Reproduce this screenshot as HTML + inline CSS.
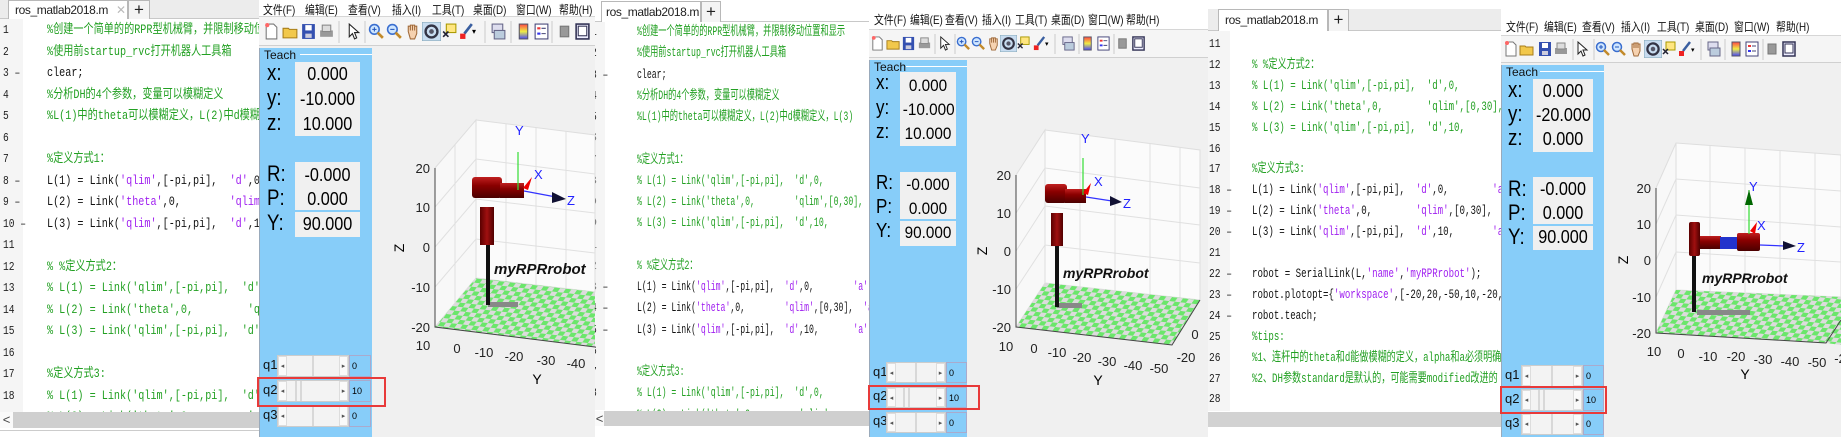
<!DOCTYPE html>
<html><head><meta charset="utf-8">
<style>
*{margin:0;padding:0;box-sizing:border-box}
body{width:1841px;height:437px;overflow:hidden;background:#fff;position:relative;font-family:"Liberation Sans","Noto Sans CJK SC",sans-serif}
.ed{position:absolute;top:0;height:437px;background:#fff;overflow:hidden}
.tabbar{position:absolute;left:0;right:0;background:#ececec;border-bottom:1px solid #c8c8c8}
.tab{position:absolute;background:#fff;border:1px solid #b8b8b8;border-bottom:none;font-size:12px;letter-spacing:-0.4px;color:#222;white-space:nowrap;padding-left:6px;overflow:hidden}
.tab i{font-style:normal;color:#bbb;margin-left:8px}
.plus{position:absolute;background:#f4f4f4;border:1px solid #b8b8b8;border-bottom:none;font-size:17px;text-align:center;color:#222}
.gut{position:absolute;left:0;width:23px;background:#f5f5f5}
.ln{position:absolute;font-family:"Liberation Mono",monospace;font-size:12px;color:#222;white-space:pre;transform:scaleX(.8);transform-origin:left top}
.code{position:absolute;font-family:"Liberation Mono","Noto Sans CJK SC",monospace;font-size:13px;color:#111;white-space:pre;transform-origin:left top}
.c{color:#22a022}.s{color:#a020f0}
.sb{position:absolute;background:#cfcfcf}
.sb b{position:absolute;left:0;top:0;bottom:0;width:13px;background:#fafafa;font-weight:normal;font-size:13px;text-align:center;color:#444}
.fig{position:absolute;top:0;height:437px;background:#f0f0f0;overflow:hidden}
.menu{position:absolute;left:0;right:0;background:#fff;border-bottom:1px solid #d6d6d6}
.menu span{position:absolute;font-size:12px;color:#111;white-space:nowrap;transform:scaleX(.82);transform-origin:left top}
.tb{position:absolute;left:0;right:0;background:#f5f5f5;border-bottom:1px solid #d0d0d0}
.teach{position:absolute;background:#87cdf9;border-left:1px solid #9ab}
.teach .tt{position:absolute;left:4px;top:0;font-size:12px;color:#111}
.teach .gl{position:absolute;top:6px;height:1px;background:#fff;right:0}
.box{position:absolute;background:#f0f0f0}
.lab{position:absolute;font-size:22px;color:#000;transform:scaleX(.85);transform-origin:left}
.val{position:absolute;font-size:18px;color:#000;text-align:center;transform:scaleX(.9)}
.q{position:absolute;font-size:13px;color:#111}
.sl{position:absolute;height:22px;background:#f3f3f3;border:1px solid #ccc}
.sl .a{position:absolute;top:0;bottom:0;width:9px;background:#fafafa;border:1px solid #ddd;font-size:7px;line-height:20px;text-align:center;color:#555}
.sl .d{position:absolute;top:0;bottom:0;width:2px;background:#d8d8d8}
.vb{position:absolute;height:22px;border:1px solid #aac;font-size:9px;padding-left:2px;line-height:20px;color:#000}
.red{position:absolute;border:2px solid #e83a3a}
</style></head><body>

<svg width="0" height="0" style="position:absolute">
<defs>
<symbol id="i-new" viewBox="0 0 16 16"><path d="M3 1h7l3 3v11H3z" fill="#fff" stroke="#777"/><circle cx="4" cy="2" r="2" fill="#f66"/></symbol>
<symbol id="i-open" viewBox="0 0 16 16"><path d="M1 5h5l1 1h7v8H1z" fill="#f2c84b" stroke="#a77d1a"/></symbol>
<symbol id="i-save" viewBox="0 0 16 16"><rect x="2" y="1" width="12" height="14" fill="#3450b0"/><rect x="5" y="2" width="6" height="5" fill="#fff"/><rect x="5" y="10" width="6" height="4" fill="#ccd"/></symbol>
<symbol id="i-print" viewBox="0 0 16 16"><rect x="2" y="7" width="12" height="6" fill="#999"/><rect x="4" y="2" width="8" height="6" fill="#ddd" stroke="#888"/></symbol>
<symbol id="i-ptr" viewBox="0 0 16 16"><path d="M4 1v12l3-3 2 5 2-1-2-5h4z" fill="#fff" stroke="#222"/></symbol>
<symbol id="i-zi" viewBox="0 0 16 16"><circle cx="6" cy="6" r="4.5" fill="#cfe6ff" stroke="#3a6ecf" stroke-width="1.5"/><path d="M9 9l5 5" stroke="#c28a2a" stroke-width="2.5"/><path d="M4 6h4M6 4v4" stroke="#2255bb"/></symbol>
<symbol id="i-zo" viewBox="0 0 16 16"><circle cx="6" cy="6" r="4.5" fill="#cfe6ff" stroke="#3a6ecf" stroke-width="1.5"/><path d="M9 9l5 5" stroke="#c28a2a" stroke-width="2.5"/><path d="M4 6h4" stroke="#2255bb"/></symbol>
<symbol id="i-pan" viewBox="0 0 16 16"><path d="M4 8V3h2v4V2h2v5V2h2v5V3h2v7l-2 5H6z" fill="#f6d2b0" stroke="#a06a3a"/></symbol>
<symbol id="i-rot" viewBox="0 0 16 16"><rect x="0" y="0" width="16" height="16" fill="#c8dcf0" stroke="#8ab"/><circle cx="8" cy="8" r="5" fill="none" stroke="#334" stroke-width="2"/><circle cx="8" cy="8" r="2" fill="#556"/></symbol>
<symbol id="i-dc" viewBox="0 0 16 16"><rect x="5" y="1" width="9" height="8" fill="#ffe680" stroke="#a90"/><path d="M2 8l5 5M2 13l5-5" stroke="#223" stroke-width="1.5"/></symbol>
<symbol id="i-br" viewBox="0 0 16 16"><path d="M13 1L6 10" stroke="#3a5fa0" stroke-width="2.5"/><rect x="2" y="10" width="5" height="5" fill="#e22"/></symbol>
<symbol id="i-link" viewBox="0 0 16 16"><rect x="2" y="1" width="10" height="8" fill="#dde" stroke="#668"/><rect x="4" y="7" width="10" height="8" fill="#bcd" stroke="#668"/></symbol>
<symbol id="i-cb" viewBox="0 0 16 16"><defs><linearGradient id="gcb" x1="0" y1="0" x2="0" y2="1"><stop offset="0" stop-color="#f44"/><stop offset=".5" stop-color="#ee4"/><stop offset="1" stop-color="#44f"/></linearGradient></defs><rect x="4" y="1" width="8" height="14" fill="url(#gcb)" stroke="#556"/></symbol>
<symbol id="i-lg" viewBox="0 0 16 16"><rect x="2" y="1" width="12" height="14" fill="#fff" stroke="#447"/><rect x="4" y="4" width="3" height="2" fill="#e33"/><rect x="4" y="9" width="3" height="2" fill="#33e"/><path d="M8 5h4M8 10h4" stroke="#447"/></symbol>
<symbol id="i-gr" viewBox="0 0 16 16"><rect x="4" y="3" width="8" height="10" fill="#999" stroke="#777"/></symbol>
<symbol id="i-bx" viewBox="0 0 16 16"><rect x="2" y="1" width="12" height="14" fill="#eef" stroke="#335" stroke-width="1.5"/><rect x="4" y="3" width="8" height="9" fill="#fff" stroke="#335"/></symbol>
<pattern id="chk" width="12" height="8" patternUnits="userSpaceOnUse" patternTransform="skewX(-35) skewY(6)"><rect width="12" height="8" fill="#dcdcdc"/><rect width="6" height="4" fill="#6be66b"/><rect x="6" y="4" width="6" height="4" fill="#6be66b"/></pattern>
<linearGradient id="rg" x1="0" y1="0" x2="0" y2="1"><stop offset="0" stop-color="#c02020"/><stop offset=".4" stop-color="#8a0000"/><stop offset="1" stop-color="#4a0000"/></linearGradient>
<linearGradient id="rgv" x1="0" y1="0" x2="1" y2="0"><stop offset="0" stop-color="#5a0000"/><stop offset=".5" stop-color="#a01010"/><stop offset="1" stop-color="#500000"/></linearGradient>
</defs></svg>

<!-- ===== EDITOR 1 ===== -->
<div class="ed" style="left:0;width:259px">
 <div class="tabbar" style="top:0;height:19px"></div>
 <div class="tab" style="left:8px;top:0;width:120px;height:19px;line-height:18px">ros_matlab2018.m<i>✕</i></div>
 <div class="plus" style="left:128px;top:0;width:22px;height:19px;line-height:17px">+</div>
 <div class="gut" style="top:19px;height:393px"></div>
 <div class="ln" style="left:3px;top:20px;line-height:21.5px">1
2
3 –
4
5
6
7
8 –
9 –
10 –
11
12
13
14
15
16
17
18</div>
 <div class="code" style="left:47px;top:19px;line-height:21.5px;transform:scaleX(.78)"><span class="c">%创建一个简单的的RPR型机械臂，并限制移动位置和显示</span>
<span class="c">%使用前startup_rvc打开机器人工具箱</span>
clear;
<span class="c">%分析DH的4个参数，变量可以模糊定义</span>
<span class="c">%L(1)中的theta可以模糊定义，L(2)中d模糊定义</span>

<span class="c">%定义方式1：</span>
L(1) = Link(<span class="s">'qlim'</span>,[-pi,pi],  <span class="s">'d'</span>,0,
L(2) = Link(<span class="s">'theta'</span>,0,        <span class="s">'qlim'</span>,[0,30],
L(3) = Link(<span class="s">'qlim'</span>,[-pi,pi],  <span class="s">'d'</span>,10,

<span class="c">% %定义方式2：</span>
<span class="c">% L(1) = Link('qlim',[-pi,pi],  'd',0,</span>
<span class="c">% L(2) = Link('theta',0,         'qlim',</span>
<span class="c">% L(3) = Link('qlim',[-pi,pi],  'd',10,</span>

<span class="c">%定义方式3:</span>
<span class="c">% L(1) = Link('qlim',[-pi,pi],  'd',0,</span>
<span class="c">% L(2) = Link('theta',0,         'qlim',</span></div>
 <div class="sb" style="left:0;top:412px;width:259px;height:16px"><b>&lt;</b></div>
 <div style="position:absolute;left:0;top:430px;width:259px;height:1px;background:#ccc"></div>
</div>

<!-- ===== FIGURE 1 ===== -->
<div class="fig" style="left:259px;width:336px">
 <div class="menu" style="top:0;height:17px">
  <span style="left:4px;top:1px">文件(F)</span><span style="left:46px;top:1px">编辑(E)</span><span style="left:89px;top:1px">查看(V)</span><span style="left:133px;top:1px">插入(I)</span><span style="left:173px;top:1px">工具(T)</span><span style="left:214px;top:1px">桌面(D)</span><span style="left:257px;top:1px">窗口(W)</span><span style="left:300px;top:1px">帮助(H)</span>
 </div>
 <div class="tb" style="top:17px;height:29px">
  <svg width="336" height="29" style="position:absolute;left:0;top:0">
   <use href="#i-new" x="4" y="6" width="17" height="17"/><use href="#i-open" x="23" y="6" width="17" height="17"/><use href="#i-save" x="41" y="6" width="17" height="17"/><use href="#i-print" x="59" y="6" width="17" height="17"/>
   <path d="M80 4v22" stroke="#ccc"/><use href="#i-ptr" x="86" y="6" width="17" height="17"/><path d="M106 4v22" stroke="#ccc"/>
   <use href="#i-zi" x="109" y="6" width="17" height="17"/><use href="#i-zo" x="127" y="6" width="17" height="17"/><use href="#i-pan" x="145" y="6" width="17" height="17"/><use href="#i-rot" x="163" y="5" width="19" height="19"/><use href="#i-dc" x="182" y="6" width="17" height="17"/><use href="#i-br" x="199" y="6" width="17" height="17"/><text x="213" y="17" font-size="8">▾</text>
   <path d="M226 4v22" stroke="#ccc"/><use href="#i-link" x="231" y="6" width="17" height="17"/><path d="M252 4v22" stroke="#ccc"/><use href="#i-cb" x="256" y="6" width="17" height="17"/><use href="#i-lg" x="274" y="6" width="17" height="17"/><path d="M293 4v22" stroke="#ccc"/><use href="#i-gr" x="297" y="6" width="17" height="17"/><use href="#i-bx" x="315" y="6" width="17" height="17"/>
  </svg>
 </div>
 <div class="teach" style="left:0;top:48px;width:113px;height:389px">
  <div class="tt">Teach</div><div class="gl" style="left:40px"></div>
  <div class="box" style="left:35px;top:14px;width:65px;height:74px"></div>
  <div class="box" style="left:35px;top:114px;width:65px;height:48px"></div>
  <div class="box" style="left:35px;top:164px;width:65px;height:25px"></div>
  <div class="lab" style="left:7px;top:12px">x:</div><div class="lab" style="left:7px;top:37px">y:</div><div class="lab" style="left:7px;top:62px">z:</div>
  <div class="lab" style="left:7px;top:113px">R:</div><div class="lab" style="left:7px;top:137px">P:</div><div class="lab" style="left:7px;top:162px">Y:</div>
  <div class="val" style="left:35px;width:65px;top:16px">0.000</div><div class="val" style="left:35px;width:65px;top:41px">-10.000</div><div class="val" style="left:35px;width:65px;top:66px">10.000</div>
  <div class="val" style="left:35px;width:65px;top:117px">-0.000</div><div class="val" style="left:35px;width:65px;top:141px">0.000</div><div class="val" style="left:35px;width:65px;top:166px">90.000</div>
  <div class="q" style="left:3px;top:309px">q1</div><div class="q" style="left:3px;top:334px">q2</div><div class="q" style="left:3px;top:359px">q3</div>
  <div class="sl" style="left:17px;top:307px;width:72px"><div class="a" style="left:0">◂</div><div class="d" style="left:34px"></div><div class="a" style="right:0">▸</div></div>
  <div class="sl" style="left:17px;top:332px;width:72px"><div class="a" style="left:0">◂</div><div class="d" style="left:17px"></div><div class="d" style="left:22px"></div><div class="a" style="right:0">▸</div></div>
  <div class="sl" style="left:17px;top:357px;width:72px"><div class="a" style="left:0">◂</div><div class="d" style="left:34px"></div><div class="a" style="right:0">▸</div></div>
  <div class="vb" style="left:89px;top:307px;width:22px">0</div><div class="vb" style="left:89px;top:332px;width:22px">10</div><div class="vb" style="left:89px;top:357px;width:22px">0</div>
 </div>
</div>

<!-- ===== EDITOR 2 ===== -->
<div class="ed" style="left:595px;width:274px">
 <div class="tabbar" style="top:0;height:22px;background:#fff"></div>
 <div class="tab" style="left:6px;top:1px;width:100px;height:21px;line-height:20px;padding-left:4px">ros_matlab2018.m<i style="margin-left:4px">✕</i></div>
 <div class="plus" style="left:106px;top:1px;width:20px;height:21px;line-height:19px">+</div>
 <div class="gut" style="top:22px;height:388px;width:10px"></div>
 <div class="ln" style="left:-4px;top:22px;line-height:21.25px">1
2
3 –
4
5
6
7
8
9
0
1
2
3 –
4 –
5 –
6
7
8</div>
 <div class="code" style="left:42px;top:21px;line-height:21.25px;transform:scaleX(.63)"><span class="c">%创建一个简单的的RPR型机械臂，并限制移动位置和显示</span>
<span class="c">%使用前startup_rvc打开机器人工具箱</span>
clear;
<span class="c">%分析DH的4个参数，变量可以模糊定义</span>
<span class="c">%L(1)中的theta可以模糊定义，L(2)中d模糊定义，L(3)</span>

<span class="c">%定义方式1：</span>
<span class="c">% L(1) = Link('qlim',[-pi,pi],  'd',0,</span>
<span class="c">% L(2) = Link('theta',0,        'qlim',[0,30],</span>
<span class="c">% L(3) = Link('qlim',[-pi,pi],  'd',10,</span>

<span class="c">% %定义方式2：</span>
L(1) = Link(<span class="s">'qlim'</span>,[-pi,pi],  <span class="s">'d'</span>,0,        <span class="s">'a'</span>
L(2) = Link(<span class="s">'theta'</span>,0,        <span class="s">'qlim'</span>,[0,30],  <span class="s">'a'</span>
L(3) = Link(<span class="s">'qlim'</span>,[-pi,pi],  <span class="s">'d'</span>,10,       <span class="s">'a'</span>

<span class="c">%定义方式3:</span>
<span class="c">% L(1) = Link('qlim',[-pi,pi],  'd',0,</span>
<span class="c">% L(2) = Link('theta',0,         'qlim',</span></div>
 <div class="sb" style="left:0;top:411px;width:274px;height:15px"><b style="width:9px">&lt;</b></div>
</div>

<!-- ===== FIGURE 2 ===== -->
<div class="fig" style="left:869px;width:339px">
 <div class="menu" style="top:0;height:30px">
  <span style="left:5px;top:11px">文件(F)</span><span style="left:41px;top:11px">编辑(E)</span><span style="left:76px;top:11px">查看(V)</span><span style="left:113px;top:11px">插入(I)</span><span style="left:146px;top:11px">工具(T)</span><span style="left:182px;top:11px">桌面(D)</span><span style="left:219px;top:11px">窗口(W)</span><span style="left:257px;top:11px">帮助(H)</span>
 </div>
 <div class="tb" style="top:30px;height:28px">
  <svg width="339" height="28" style="position:absolute;left:0;top:0">
   <use href="#i-new" x="1" y="6" width="15" height="15"/><use href="#i-open" x="17" y="6" width="15" height="15"/><use href="#i-save" x="32" y="6" width="15" height="15"/><use href="#i-print" x="48" y="6" width="15" height="15"/>
   <path d="M66 4v20" stroke="#ccc"/><use href="#i-ptr" x="68" y="6" width="15" height="15"/><path d="M86 4v20" stroke="#ccc"/>
   <use href="#i-zi" x="87" y="6" width="15" height="15"/><use href="#i-zo" x="102" y="6" width="15" height="15"/><use href="#i-pan" x="117" y="6" width="15" height="15"/><use href="#i-rot" x="131" y="5" width="17" height="17"/><use href="#i-dc" x="147" y="6" width="15" height="15"/><use href="#i-br" x="163" y="6" width="15" height="15"/><text x="176" y="16" font-size="7">▾</text>
   <path d="M186 4v20" stroke="#ccc"/><use href="#i-link" x="192" y="6" width="15" height="15"/><path d="M210 4v20" stroke="#ccc"/><use href="#i-cb" x="211" y="6" width="15" height="15"/><use href="#i-lg" x="227" y="6" width="15" height="15"/><path d="M245 4v20" stroke="#ccc"/><use href="#i-gr" x="246" y="6" width="15" height="15"/><use href="#i-bx" x="262" y="6" width="15" height="15"/>
  </svg>
 </div>
 <div class="teach" style="left:0;top:60px;width:98px;height:377px">
  <div class="tt">Teach</div><div class="gl" style="left:36px"></div>
  <div class="box" style="left:30px;top:12px;width:56px;height:74px"></div>
  <div class="box" style="left:30px;top:112px;width:56px;height:47px"></div>
  <div class="box" style="left:30px;top:161px;width:56px;height:25px"></div>
  <div class="lab" style="left:6px;top:12px;font-size:20px">x:</div><div class="lab" style="left:6px;top:37px;font-size:20px">y:</div><div class="lab" style="left:6px;top:61px;font-size:20px">z:</div>
  <div class="lab" style="left:6px;top:112px;font-size:20px">R:</div><div class="lab" style="left:6px;top:136px;font-size:20px">P:</div><div class="lab" style="left:6px;top:160px;font-size:20px">Y:</div>
  <div class="val" style="left:30px;width:56px;top:16px;font-size:17px">0.000</div><div class="val" style="left:30px;width:56px;top:40px;font-size:17px">-10.000</div><div class="val" style="left:30px;width:56px;top:64px;font-size:17px">10.000</div>
  <div class="val" style="left:30px;width:56px;top:115px;font-size:17px">-0.000</div><div class="val" style="left:30px;width:56px;top:139px;font-size:17px">0.000</div><div class="val" style="left:30px;width:56px;top:163px;font-size:17px">90.000</div>
  <div class="q" style="left:3px;top:304px">q1</div><div class="q" style="left:3px;top:328px">q2</div><div class="q" style="left:3px;top:353px">q3</div>
  <div class="sl" style="left:16px;top:302px;width:60px;height:21px"><div class="a" style="left:0">◂</div><div class="d" style="left:28px"></div><div class="a" style="right:0">▸</div></div>
  <div class="sl" style="left:16px;top:327px;width:60px;height:21px"><div class="a" style="left:0">◂</div><div class="d" style="left:16px"></div><div class="d" style="left:21px"></div><div class="a" style="right:0">▸</div></div>
  <div class="sl" style="left:16px;top:352px;width:60px;height:21px"><div class="a" style="left:0">◂</div><div class="d" style="left:28px"></div><div class="a" style="right:0">▸</div></div>
  <div class="vb" style="left:76px;top:302px;width:21px;height:21px">0</div><div class="vb" style="left:76px;top:327px;width:21px;height:21px">10</div><div class="vb" style="left:76px;top:352px;width:21px;height:21px">0</div>
 </div>
</div>

<!-- ===== EDITOR 3 ===== -->
<div class="ed" style="left:1208px;width:293px">
 <div style="position:absolute;left:0;right:0;top:9px;height:22px;background:#ececec;border-bottom:1px solid #c8c8c8"></div>
 <div class="tab" style="left:10px;top:9px;width:110px;height:22px;line-height:21px;padding-left:6px">ros_matlab2018.m<i style="margin-left:8px">✕</i></div>
 <div class="plus" style="left:120px;top:9px;width:21px;height:22px;line-height:20px">+</div>
 <div class="gut" style="top:31px;height:380px;width:22px"></div>
 <div class="ln" style="left:1px;top:34px;line-height:20.9px">11
12
13
14
15
16
17
18 –
19 –
20 –
21
22 –
23 –
24 –
25
26
27
28</div>
 <div class="code" style="left:44px;top:34px;line-height:20.9px;transform:scaleX(.70)">
<span class="c">% %定义方式2：</span>
<span class="c">% L(1) = Link('qlim',[-pi,pi],  'd',0,</span>
<span class="c">% L(2) = Link('theta',0,        'qlim',[0,30],</span>
<span class="c">% L(3) = Link('qlim',[-pi,pi],  'd',10,</span>

<span class="c">%定义方式3:</span>
L(1) = Link(<span class="s">'qlim'</span>,[-pi,pi],  <span class="s">'d'</span>,0,        <span class="s">'a'</span>
L(2) = Link(<span class="s">'theta'</span>,0,        <span class="s">'qlim'</span>,[0,30],  <span class="s">'a'</span>
L(3) = Link(<span class="s">'qlim'</span>,[-pi,pi],  <span class="s">'d'</span>,10,       <span class="s">'a'</span>

robot = SerialLink(L,<span class="s">'name'</span>,<span class="s">'myRPRrobot'</span>);
robot.plotopt={<span class="s">'workspace'</span>,[-20,20,-50,10,-20,20]};
robot.teach;
<span class="c">%tips:</span>
<span class="c">%1、连杆中的theta和d能做模糊的定义，alpha和a必须明确</span>
<span class="c">%2、DH参数standard是默认的，可能需要modified改进的</span>
</div>
 <div class="sb" style="left:0;top:412px;width:293px;height:15px;background:#d2d2d2"><b style="background:#d2d2d2;width:1px"></b></div>
</div>

<!-- ===== FIGURE 3 ===== -->
<div class="fig" style="left:1501px;width:340px">
 <div class="menu" style="top:0;height:36px">
  <span style="left:5px;top:18px">文件(F)</span><span style="left:43px;top:18px">编辑(E)</span><span style="left:81px;top:18px">查看(V)</span><span style="left:120px;top:18px">插入(I)</span><span style="left:156px;top:18px">工具(T)</span><span style="left:194px;top:18px">桌面(D)</span><span style="left:233px;top:18px">窗口(W)</span><span style="left:275px;top:18px">帮助(H)</span>
 </div>
 <div class="tb" style="top:36px;height:27px">
  <svg width="340" height="27" style="position:absolute;left:0;top:0">
   <use href="#i-new" x="2" y="5" width="16" height="16"/><use href="#i-open" x="18" y="5" width="16" height="16"/><use href="#i-save" x="36" y="5" width="16" height="16"/><use href="#i-print" x="52" y="5" width="16" height="16"/>
   <path d="M72 3v21" stroke="#ccc"/><use href="#i-ptr" x="73" y="5" width="16" height="16"/><path d="M93 3v21" stroke="#ccc"/>
   <use href="#i-zi" x="94" y="5" width="16" height="16"/><use href="#i-zo" x="110" y="5" width="16" height="16"/><use href="#i-pan" x="127" y="5" width="16" height="16"/><use href="#i-rot" x="143" y="4" width="18" height="18"/><use href="#i-dc" x="160" y="5" width="16" height="16"/><use href="#i-br" x="176" y="5" width="16" height="16"/><text x="190" y="16" font-size="7">▾</text>
   <path d="M200 3v21" stroke="#ccc"/><use href="#i-link" x="205" y="5" width="16" height="16"/><path d="M224 3v21" stroke="#ccc"/><use href="#i-cb" x="227" y="5" width="16" height="16"/><use href="#i-lg" x="243" y="5" width="16" height="16"/><path d="M262 3v21" stroke="#ccc"/><use href="#i-gr" x="263" y="5" width="16" height="16"/><use href="#i-bx" x="280" y="5" width="16" height="16"/>
  </svg>
 </div>
 <div class="teach" style="left:0;top:65px;width:103px;height:372px">
  <div class="tt">Teach</div><div class="gl" style="left:38px"></div>
  <div class="box" style="left:31px;top:14px;width:60px;height:73px"></div>
  <div class="box" style="left:31px;top:112px;width:60px;height:47px"></div>
  <div class="box" style="left:31px;top:161px;width:60px;height:24px"></div>
  <div class="lab" style="left:6px;top:12px">x:</div><div class="lab" style="left:6px;top:36px">y:</div><div class="lab" style="left:6px;top:60px">z:</div>
  <div class="lab" style="left:6px;top:111px">R:</div><div class="lab" style="left:6px;top:135px">P:</div><div class="lab" style="left:6px;top:159px">Y:</div>
  <div class="val" style="left:31px;width:60px;top:16px">0.000</div><div class="val" style="left:31px;width:60px;top:40px">-20.000</div><div class="val" style="left:31px;width:60px;top:64px">0.000</div>
  <div class="val" style="left:31px;width:60px;top:114px">-0.000</div><div class="val" style="left:31px;width:60px;top:138px">0.000</div><div class="val" style="left:31px;width:60px;top:162px">90.000</div>
  <div class="q" style="left:3px;top:302px">q1</div><div class="q" style="left:3px;top:326px">q2</div><div class="q" style="left:3px;top:350px">q3</div>
  <div class="sl" style="left:19px;top:300px;width:62px"><div class="a" style="left:0">◂</div><div class="d" style="left:29px"></div><div class="a" style="right:0">▸</div></div>
  <div class="sl" style="left:19px;top:324px;width:62px"><div class="a" style="left:0">◂</div><div class="d" style="left:16px"></div><div class="d" style="left:21px"></div><div class="a" style="right:0">▸</div></div>
  <div class="sl" style="left:19px;top:348px;width:62px"><div class="a" style="left:0">◂</div><div class="d" style="left:29px"></div><div class="a" style="right:0">▸</div></div>
  <div class="vb" style="left:81px;top:300px;width:21px">0</div><div class="vb" style="left:81px;top:324px;width:21px">10</div><div class="vb" style="left:81px;top:348px;width:21px">0</div>
 </div>
</div>

<!-- ===== PLOTS ===== -->
<svg width="1841" height="437" style="position:absolute;left:0;top:0" font-family="Liberation Sans, sans-serif">
 <!-- fig1 -->
 <g>
  <polygon points="435,168 476,120 476,278 435,327" fill="#f8f8f8" stroke="#dedede"/>
  <polygon points="476,120 595,135 595,292 476,278" fill="#fbfbfb" stroke="#dedede"/>
  <path fill="none" stroke="#e0e0e0" d="M435,207 476,159 595,174M435,247 476,199 595,213M435,287 476,239 595,253M506,124V282M536,128V285M566,131V289M455,145V304"/>
  <polygon points="435,327 476,278 595,292 595,347" fill="url(#chk)"/>
  <path d="M435,168V327L595,347" stroke="#444" fill="none"/>
  <g font-size="13" text-anchor="end" fill="#222"><text x="430" y="173">20</text><text x="430" y="212">10</text><text x="430" y="252">0</text><text x="430" y="292">-10</text><text x="430" y="332">-20</text></g>
  <text x="404" y="248" font-size="14" transform="rotate(-90 404 248)" text-anchor="middle">Z</text>
  <g font-size="13" text-anchor="middle" fill="#222"><text x="423" y="350">10</text><text x="457" y="353">0</text><text x="484" y="357">-10</text><text x="514" y="361">-20</text><text x="546" y="365">-30</text><text x="576" y="368">-40</text></g>
  <text x="537" y="384" font-size="14" text-anchor="middle">Y</text>
  <rect x="488" y="302" width="30" height="5" fill="#888"/>
  <rect x="486" y="245" width="4" height="60" fill="#111"/>
  <rect x="480" y="207" width="14" height="38" fill="url(#rgv)"/>
  <rect x="472" y="177" width="30" height="21" rx="3" fill="url(#rg)"/>
  <rect x="500" y="183" width="24" height="15" fill="url(#rg)"/>
  <path d="M518,152V190" stroke="#3d3" stroke-width="1.2"/>
  <path d="M524,191 556,197" stroke="#33f" stroke-width="1.3"/><path d="M552,192 566,199 552,203z" fill="#113"/>
  <path d="M523,188 532,177 528,190z" fill="#e00"/>
  <g fill="#22f" font-size="13"><text x="515" y="135">Y</text><text x="534" y="179">X</text><text x="567" y="205">Z</text></g>
  <text x="494" y="274" font-size="15" font-weight="bold" font-style="italic" fill="#111">myRPRrobot</text>
 </g>
 <!-- fig2 -->
 <g>
  <polygon points="1016,175 1045,130 1045,283 1016,327" fill="#f8f8f8" stroke="#dedede"/>
  <polygon points="1045,130 1200,150 1200,300 1045,283" fill="#fbfbfb" stroke="#dedede"/>
  <path fill="none" stroke="#e0e0e0" d="M1016,213 1045,168 1200,188M1016,251 1045,206 1200,225M1016,289 1045,245 1200,263M1080,134V287M1115,139V291M1150,143V295M1180,147V298"/>
  <polygon points="1016,327 1045,283 1200,300 1172,345" fill="url(#chk)"/>
  <path d="M1016,175V327L1172,345L1200,300" stroke="#444" fill="none"/>
  <g font-size="13" text-anchor="end" fill="#222"><text x="1011" y="180">20</text><text x="1011" y="218">10</text><text x="1011" y="256">0</text><text x="1011" y="294">-10</text><text x="1011" y="332">-20</text></g>
  <text x="987" y="251" font-size="14" transform="rotate(-90 987 251)" text-anchor="middle">Z</text>
  <g font-size="13" text-anchor="middle" fill="#222"><text x="1006" y="351">10</text><text x="1034" y="353">0</text><text x="1057" y="357">-10</text><text x="1082" y="362">-20</text><text x="1107" y="366">-30</text><text x="1133" y="370">-40</text><text x="1159" y="373">-50</text><text x="1195" y="339">0</text><text x="1186" y="362">-20</text></g>
  <text x="1098" y="385" font-size="14" text-anchor="middle">Y</text>
  <rect x="1057" y="303" width="25" height="5" fill="#888"/>
  <rect x="1055" y="245" width="4" height="62" fill="#111"/>
  <rect x="1051" y="213" width="12" height="33" fill="url(#rgv)"/>
  <rect x="1045" y="184" width="22" height="19" rx="3" fill="url(#rg)"/>
  <rect x="1065" y="189" width="21" height="14" fill="url(#rg)"/>
  <path d="M1083,158V195" stroke="#3d3" stroke-width="1.2"/>
  <path d="M1086,197 1112,201" stroke="#33f" stroke-width="1.3"/><path d="M1110,196 1122,202 1110,206z" fill="#113"/>
  <path d="M1083,193 1091,183 1088,195z" fill="#e00"/>
  <g fill="#22f" font-size="13"><text x="1081" y="143">Y</text><text x="1094" y="186">X</text><text x="1123" y="208">Z</text></g>
  <text x="1063" y="278" font-size="14" font-weight="bold" font-style="italic" fill="#111">myRPRrobot</text>
 </g>
 <!-- fig3 -->
 <g>
  <polygon points="1656,188 1676,143 1676,290 1656,333" fill="#f8f8f8" stroke="#dedede"/>
  <polygon points="1676,143 1841,155 1841,297 1676,290" fill="#fbfbfb" stroke="#dedede"/>
  <path fill="none" stroke="#e0e0e0" d="M1656,224 1676,179 1841,191M1656,260 1676,215 1841,227M1656,297 1676,252 1841,262M1710,145V291M1745,148V292M1780,150V294M1815,153V296"/>
  <polygon points="1656,333 1676,290 1841,297 1841,345 1826,343" fill="url(#chk)"/>
  <path d="M1656,188V333L1826,343L1841,320" stroke="#444" fill="none"/>
  <g font-size="13" text-anchor="end" fill="#222"><text x="1651" y="193">20</text><text x="1651" y="229">10</text><text x="1651" y="265">0</text><text x="1651" y="302">-10</text><text x="1651" y="338">-20</text></g>
  <text x="1628" y="260" font-size="14" transform="rotate(-90 1628 260)" text-anchor="middle">Z</text>
  <g font-size="13" text-anchor="middle" fill="#222"><text x="1654" y="356">10</text><text x="1681" y="358">0</text><text x="1708" y="361">-10</text><text x="1736" y="361">-20</text><text x="1763" y="364">-30</text><text x="1790" y="366">-40</text><text x="1817" y="367">-50</text><text x="1840" y="363">-2</text></g>
  <text x="1745" y="379" font-size="14" text-anchor="middle">Y</text>
  <rect x="1697" y="310" width="53" height="5" fill="#888"/>
  <rect x="1692" y="255" width="4" height="57" fill="#111"/>
  <rect x="1689" y="222" width="11" height="34" rx="2" fill="url(#rgv)"/>
  <rect x="1700" y="236" width="21" height="13" fill="url(#rg)"/>
  <rect x="1720" y="237" width="17" height="12" fill="#2233cc"/>
  <rect x="1737" y="233" width="23" height="18" rx="2" fill="url(#rg)"/>
  <path d="M1749,190V234" stroke="#3d3" stroke-width="1.2"/><path d="M1745,205 1749,190 1753,205z" fill="#060"/>
  <path d="M1760,245 1785,246" stroke="#33f" stroke-width="1.3"/><path d="M1783,241 1796,246 1783,250z" fill="#113"/>
  <path d="M1750,231 1757,222 1755,234z" fill="#e00"/>
  <g fill="#22f" font-size="13"><text x="1749" y="191">Y</text><text x="1757" y="230">X</text><text x="1797" y="252">Z</text></g>
  <text x="1702" y="283" font-size="14" font-weight="bold" font-style="italic" fill="#111">myRPRrobot</text>
 </g>
</svg>

<div class="red" style="left:257px;top:377px;width:129px;height:30px"></div>
<div class="red" style="left:868px;top:385px;width:112px;height:25px"></div>
<div class="red" style="left:1500px;top:386px;width:107px;height:28px"></div>
</body></html>
